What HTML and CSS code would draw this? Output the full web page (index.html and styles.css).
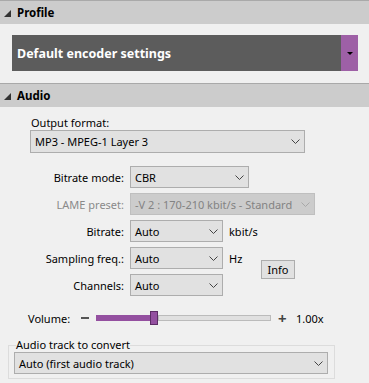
FILE: index.html
```html
<!DOCTYPE html>
<html lang="en">

<head>
    <meta charset="UTF-8">
    <title>Encoder settings</title>
    <link rel="stylesheet" href="styles.css">
</head>

<body>
    <!-- Perfil -->
    <div class="section">
        <div class="section-head"><span class="tri"></span>Profile</div>
        <div class="profile-body">
            <div class="profile-box">
                <span class="profile-name">Default encoder settings</span>
                <span class="profile-arrow"><span class="caret"></span></span>
            </div>
        </div>
    </div>

    <!-- Audio -->
    <div class="section">
        <div class="section-head"><span class="tri"></span>Audio</div>
        <div class="audio-body">
            <div class="format-label">Output format:</div>
            <div class="combo combo-format">
                <span>MP3 - MPEG-1 Layer 3</span>
                <svg class="chev" width="9" height="5" viewBox="0 0 9 5"><path d="M0.5 0.5 L4.5 4.5 L8.5 0.5" fill="none" stroke="#444" stroke-width="1"/></svg>
            </div>

            <div class="rows">
                <div class="row">
                    <label class="lbl">Bitrate mode:</label>
                    <div class="combo combo-mode">
                        <span>CBR</span>
                        <svg class="chev" width="9" height="5" viewBox="0 0 9 5"><path d="M0.5 0.5 L4.5 4.5 L8.5 0.5" fill="none" stroke="#444" stroke-width="1"/></svg>
                    </div>
                </div>
                <div class="row">
                    <label class="lbl disabled">LAME preset:</label>
                    <div class="combo combo-lame off">
                        <span>-V 2 : 170-210 kbit/s - Standard</span>
                        <svg class="chev" width="9" height="5" viewBox="0 0 9 5"><path d="M0.5 0.5 L4.5 4.5 L8.5 0.5" fill="none" stroke="#a8a8a8" stroke-width="1"/></svg>
                    </div>
                </div>
                <div class="row">
                    <label class="lbl">Bitrate:</label>
                    <div class="combo combo-small">
                        <span>Auto</span>
                        <svg class="chev" width="9" height="5" viewBox="0 0 9 5"><path d="M0.5 0.5 L4.5 4.5 L8.5 0.5" fill="none" stroke="#444" stroke-width="1"/></svg>
                    </div>
                    <span class="unit">kbit/s</span>
                </div>
                <div class="pair">
                    <div class="pair-rows">
                        <div class="row">
                            <label class="lbl">Sampling freq.:</label>
                            <div class="combo combo-small">
                                <span>Auto</span>
                                <svg class="chev" width="9" height="5" viewBox="0 0 9 5"><path d="M0.5 0.5 L4.5 4.5 L8.5 0.5" fill="none" stroke="#444" stroke-width="1"/></svg>
                            </div>
                            <span class="unit">Hz</span>
                        </div>
                        <div class="row">
                            <label class="lbl">Channels:</label>
                            <div class="combo combo-small">
                                <span>Auto</span>
                                <svg class="chev" width="9" height="5" viewBox="0 0 9 5"><path d="M0.5 0.5 L4.5 4.5 L8.5 0.5" fill="none" stroke="#444" stroke-width="1"/></svg>
                            </div>
                            <span class="unit"></span>
                        </div>
                    </div>
                    <button class="info">Info</button>
                </div>
            </div>

            <div class="volume">
                <span class="vol-label">Volume:</span>
                <span class="minus"></span>
                <div class="track">
                    <div class="fill" style="width: 54px"></div>
                    <div class="thumb"></div>
                    <div class="rest"></div>
                </div>
                <span class="plus">+</span>
                <span class="vol-value">1.00x</span>
            </div>

            <fieldset class="group">
                <legend>Audio track to convert</legend>
                <div class="combo combo-track">
                    <span>Auto (first audio track)</span>
                    <svg class="chev" width="9" height="5" viewBox="0 0 9 5"><path d="M0.5 0.5 L4.5 4.5 L8.5 0.5" fill="none" stroke="#444" stroke-width="1"/></svg>
                </div>
            </fieldset>
        </div>
    </div>
</body>

</html>
```

FILE: styles.css
```css
/* Estilos generales */
body {
    margin: 0;
    background-color: #f0f0f0;
    font-family: "Noto Sans", "Open Sans", sans-serif;
    font-size: 11px;
    color: #000;
    overflow: hidden;
}

.section {
    border-top: 1px solid #a9a9a9;
}

.section-head {
    height: 23px;
    background-color: #cccccc;
    display: flex;
    align-items: center;
    font-weight: bold;
    font-size: 11.5px;
    padding-left: 4px;
}

.tri {
    width: 0;
    height: 0;
    border-left: 7px solid transparent;
    border-bottom: 7px solid #333;
    margin-right: 6px;
    margin-top: 1px;
}

/* Perfil */
.profile-body {
    padding: 11px 11px 12px 12px;
}

.profile-box {
    height: 36px;
    background-color: #5c5c5c;
    display: flex;
    align-items: center;
}

.profile-name {
    flex: 1;
    color: #fff;
    font-weight: bold;
    font-size: 12.5px;
    padding-left: 5px;
    padding-top: 1px;
}

.profile-arrow {
    width: 17px;
    height: 100%;
    background-color: #9e60a6;
    display: flex;
    align-items: center;
    justify-content: center;
}

.caret {
    width: 0;
    height: 0;
    border-left: 3px solid transparent;
    border-right: 3px solid transparent;
    border-top: 3px solid #000;
}

/* Audio */
.audio-body {
    padding: 9px 0 0 0;
}

.format-label {
    padding-left: 31px;
    line-height: 14px;
}

.combo {
    box-sizing: border-box;
    height: 22px;
    background-color: #e1e1e1;
    border: 1px solid #adadad;
    display: flex;
    align-items: center;
    justify-content: space-between;
    padding: 0 4px 0 4px;
    white-space: nowrap;
}

.combo.off {
    background-color: #cccccc;
    border-color: #bfbfbf;
    color: #838383;
}

.combo-format {
    margin: 0 0 0 30px;
    width: 275px;
    height: 23px;
}

.rows {
    margin-top: 13px;
    display: flex;
    flex-direction: column;
    gap: 5px;
}

.row {
    display: flex;
    align-items: center;
}

.lbl {
    width: 130px;
    text-align: right;
    padding-right: 6px;
    box-sizing: border-box;
}

.lbl.disabled {
    color: #8a8a8a;
}

.combo-mode {
    width: 119px;
}

.combo-lame {
    width: 185px;
}

.combo-small {
    width: 93px;
}

.unit {
    width: 32px;
    padding-left: 6px;
}

.pair {
    display: flex;
    align-items: center;
}

.pair-rows {
    display: flex;
    flex-direction: column;
    gap: 5px;
}

.info {
    font-family: inherit;
    font-size: 11px;
    height: 19px;
    width: 34px;
    padding: 0;
    background-color: #e1e1e1;
    border: 1px solid #adadad;
    margin-top: -4px;
    color: #000;
}

/* Volumen */
.volume {
    display: flex;
    align-items: center;
    margin-top: 14px;
    height: 16px;
}

.vol-label {
    margin-left: 28px;
    width: 53px;
}

.minus {
    width: 8px;
    height: 2px;
    background-color: #555;
    margin-right: 7px;
}

.track {
    display: flex;
    align-items: center;
    width: 175px;
}

.fill {
    height: 6px;
    background-color: #9450a0;
}

.thumb {
    box-sizing: border-box;
    width: 8px;
    height: 14px;
    background-color: #9450a0;
    border: 1px solid #5d2d66;
}

.rest {
    flex: 1;
    box-sizing: border-box;
    height: 6px;
    background-color: #e0e0e0;
    border: 1px solid #bbbbbb;
}

.plus {
    margin-left: 7px;
    font-size: 15px;
    font-weight: bold;
    color: #444;
    width: 18px;
}

.vol-value {
    color: #000;
}

/* Pista de audio */
.group {
    margin: 12px 0 0 8px;
    width: 327px;
    box-sizing: border-box;
    border: 1px solid #dcdcdc;
    padding: 0 6px 4px 5px;
}

.group legend {
    padding: 0;
    margin-left: 2px;
    line-height: 14px;
}

.combo-track {
    width: 314px;
    height: 22px;
}
```
